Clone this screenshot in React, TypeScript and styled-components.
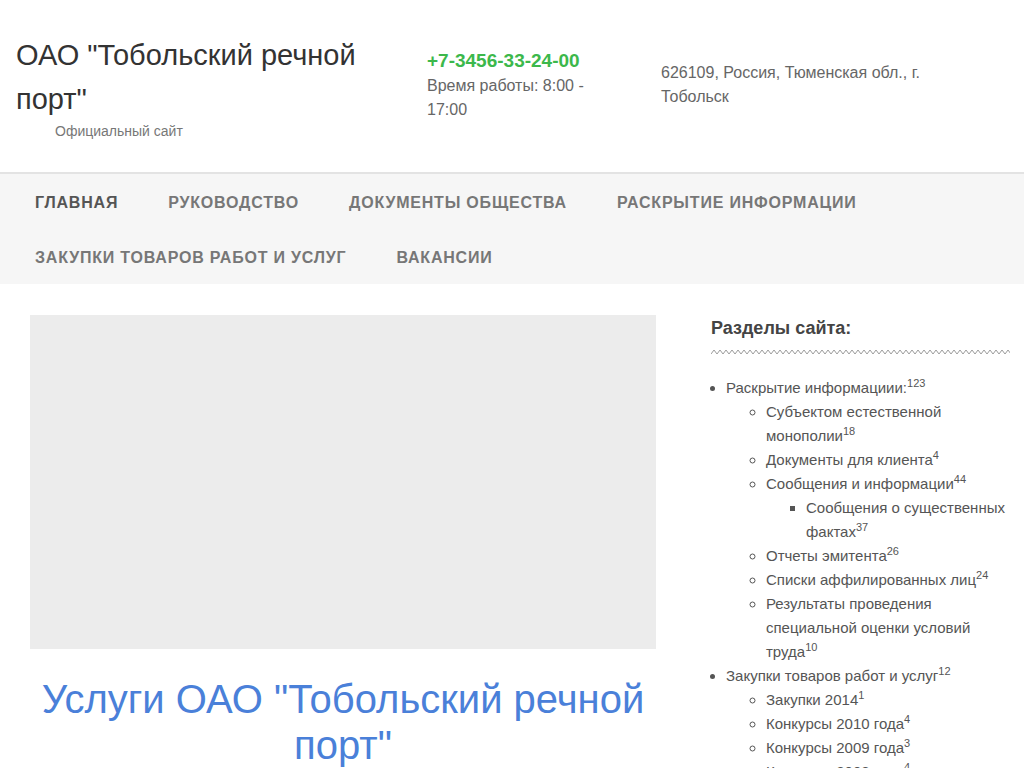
import React, { FC } from 'react';
import styled, { createGlobalStyle } from 'styled-components';

const GlobalStyle = createGlobalStyle`
  html, body {
    margin: 0;
    padding: 0;
    background: #fff;
    font-family: "Liberation Sans", Arial, sans-serif;
    color: #555;
  }
  * {
    box-sizing: border-box;
  }
`;

const Header = styled.header`
  display: flex;
  height: 174px;
  padding-left: 16px;
  border-bottom: 2px solid #e3e3e3;
`;

const Column = styled.div<{ width?: number; top: number }>`
  width: ${({ width }) => (width ? `${width}px` : 'auto')};
  flex: ${({ width }) => (width ? 'none' : '1')};
  padding-top: ${({ top }) => top}px;
`;

const SiteTitle = styled.div`
  font-size: 29px;
  line-height: 44px;
  color: #333;
  width: 370px;
`;

const SiteTagline = styled.div`
  font-size: 14px;
  line-height: 20px;
  color: #777;
  padding-left: 39px;
`;

const Phone = styled.div`
  font-size: 19px;
  font-weight: bold;
  line-height: 26px;
  color: #3cb84b;
`;

const InfoText = styled.div<{ width: number }>`
  font-size: 16px;
  line-height: 24px;
  color: #666;
  width: ${({ width }) => width}px;
`;

const Nav = styled.nav`
  display: flex;
  flex-wrap: wrap;
  background: #f6f6f6;
  padding: 1px 130px 0 10px;
  height: 110px;
`;

const NavItem = styled.a<{ active?: boolean }>`
  display: block;
  padding: 0 25px;
  height: 55px;
  line-height: 55px;
  font-size: 16px;
  font-weight: bold;
  text-transform: uppercase;
  letter-spacing: 0.8px;
  color: ${({ active }) => (active ? '#555' : '#777')};
  text-decoration: none;
`;

const Main = styled.div`
  display: flex;
  gap: 55px;
  padding: 31px 14px 0 30px;
`;

const Content = styled.div`
  width: 626px;
  flex: none;
`;

const Placeholder = styled.div`
  height: 334px;
  background: #ececec;
`;

const PageTitle = styled.h1`
  margin: 27px 0 0;
  font-size: 40px;
  font-weight: normal;
  line-height: 46px;
  text-align: center;
  color: #4a80d9;
`;

const Sidebar = styled.aside`
  flex: 1;
  padding-top: 1px;
`;

const SidebarTitle = styled.h3`
  margin: 0;
  font-size: 18px;
  font-weight: bold;
  line-height: 24px;
  color: #444;
`;

const Zigzag = styled.svg`
  display: block;
  width: 100%;
  height: 8px;
  margin: 8px 0 20px;
`;

const List = styled.ul<{ kind: 'disc' | 'circle' | 'square' }>`
  margin: 0;
  padding-left: ${({ kind }) => (kind === 'disc' ? '15px' : '40px')};
  list-style: ${({ kind }) => kind};
  font-size: 15px;
  line-height: 24px;
  color: #555;
`;

const Count = styled.sup`
  font-size: 11px;
  line-height: 0;
`;

interface Section {
  title: string;
  count: number;
  children?: Section[];
}

const sections: Section[] = [
  {
    title: 'Раскрытие информациии:',
    count: 123,
    children: [
      { title: 'Субъектом естественной монополии', count: 18 },
      { title: 'Документы для клиента', count: 4 },
      {
        title: 'Сообщения и информации',
        count: 44,
        children: [{ title: 'Сообщения о существенных фактах', count: 37 }],
      },
      { title: 'Отчеты эмитента', count: 26 },
      { title: 'Списки аффилированных лиц', count: 24 },
      { title: 'Результаты проведения специальной оценки условий труда', count: 10 },
    ],
  },
  {
    title: 'Закупки товаров работ и услуг',
    count: 12,
    children: [
      { title: 'Закупки 2014', count: 1 },
      { title: 'Конкурсы 2010 года', count: 4 },
      { title: 'Конкурсы 2009 года', count: 3 },
      { title: 'Конкурсы 2008 года', count: 4 },
    ],
  },
];

const kinds: Array<'disc' | 'circle' | 'square'> = ['disc', 'circle', 'square'];

const SectionList: FC<{ items: Section[]; depth: number }> = ({ items, depth }) => (
  <List kind={kinds[depth]}>
    {items.map(item => (
      <li key={item.title}>
        {item.title}
        <Count>{item.count}</Count>
        {item.children && <SectionList items={item.children} depth={depth + 1} />}
      </li>
    ))}
  </List>
);

const navItems = [
  'Главная',
  'Руководство',
  'Документы общества',
  'Раскрытие информации',
  'Закупки товаров работ и услуг',
  'Вакансии',
];

const App: FC = () => {
  return (
    <>
      <GlobalStyle />
      <Header>
        <Column width={411} top={33}>
          <SiteTitle>ОАО "Тобольский речной порт"</SiteTitle>
          <SiteTagline>Официальный сайт</SiteTagline>
        </Column>
        <Column width={234} top={48}>
          <Phone>+7-3456-33-24-00</Phone>
          <InfoText width={170}>Время работы: 8:00 - 17:00</InfoText>
        </Column>
        <Column top={61}>
          <InfoText width={270}>626109, Россия, Тюменская обл., г. Тобольск</InfoText>
        </Column>
      </Header>
      <Nav>
        {navItems.map((item, i) => (
          <NavItem key={item} href="#" active={i === 0}>
            {item}
          </NavItem>
        ))}
      </Nav>
      <Main>
        <Content>
          <Placeholder />
          <PageTitle>Услуги ОАО "Тобольский речной порт"</PageTitle>
        </Content>
        <Sidebar>
          <SidebarTitle>Разделы сайта:</SidebarTitle>
          <Zigzag preserveAspectRatio="none">
            <defs>
              <pattern id="zz" width="6" height="8" patternUnits="userSpaceOnUse">
                <polyline points="0,6 3,2 6,6" fill="none" stroke="#9a9a9a" strokeWidth="1" />
              </pattern>
            </defs>
            <rect width="100%" height="8" fill="url(#zz)" />
          </Zigzag>
          <SectionList items={sections} depth={0} />
        </Sidebar>
      </Main>
    </>
  );
};

export default App;
